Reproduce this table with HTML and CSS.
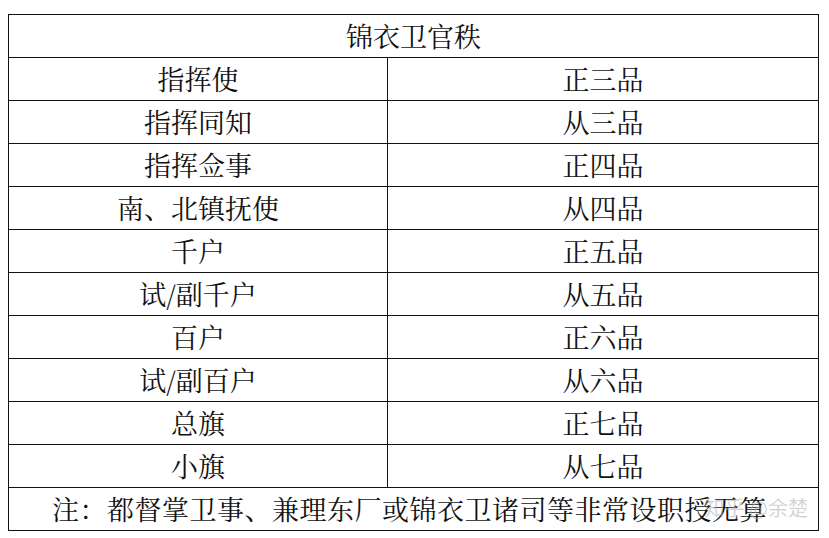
FILE: index.html
```html
<!DOCTYPE html>
<html lang="zh-CN">
<head>
<meta charset="utf-8">
<title>锦衣卫官秩</title>
<link rel="stylesheet" href="styles.css">
</head>
<body>
<div class="page">
  <table class="ranks">
    <colgroup><col class="col-left"><col class="col-right"></colgroup>
    <tr><td class="title" colspan="2">锦衣卫官秩</td></tr>
    <tr><td>指挥使</td><td>正三品</td></tr>
    <tr><td>指挥同知</td><td>从三品</td></tr>
    <tr><td>指挥佥事</td><td>正四品</td></tr>
    <tr><td>南、北镇抚使</td><td>从四品</td></tr>
    <tr><td>千户</td><td>正五品</td></tr>
    <tr><td>试/副千户</td><td>从五品</td></tr>
    <tr><td>百户</td><td>正六品</td></tr>
    <tr><td>试/副百户</td><td>从六品</td></tr>
    <tr><td>总旗</td><td>正七品</td></tr>
    <tr><td>小旗</td><td>从七品</td></tr>
    <tr><td class="note" colspan="2"><span class="note-text">注：都督掌卫事、兼理东厂或锦衣卫诸司等非常设职授无算</span><span class="watermark">知乎 @余楚</span></td></tr>
  </table>
</div>
</body>
</html>
```
FILE: styles.css
```css
html, body {
  margin: 0;
  padding: 0;
  background: #ffffff;
}
.page {
  padding: 14px 0 0 8px;
}
.ranks {
  border-collapse: collapse;
  width: 810px;
  table-layout: fixed;
  font-family: "Noto Serif CJK SC", "Noto Sans CJK SC", serif;
  color: #111;
  font-size: 27px;
}
.col-left {
  width: 379px;
}
.col-right {
  width: 431px;
}
.ranks td {
  border: 1px solid #111;
  height: 42px;
  padding: 0;
  text-align: center;
  vertical-align: middle;
  line-height: 42px;
  white-space: nowrap;
}
.ranks td.note {
  position: relative;
}
.note-text {
  letter-spacing: 0.5px;
  margin-right: 8px;
}
.watermark {
  position: absolute;
  right: 10px;
  top: 8px;
  font-size: 20px;
  line-height: 24px;
  color: rgba(175, 175, 175, 0.55);
  font-family: "Noto Sans CJK SC", sans-serif;
}
```
